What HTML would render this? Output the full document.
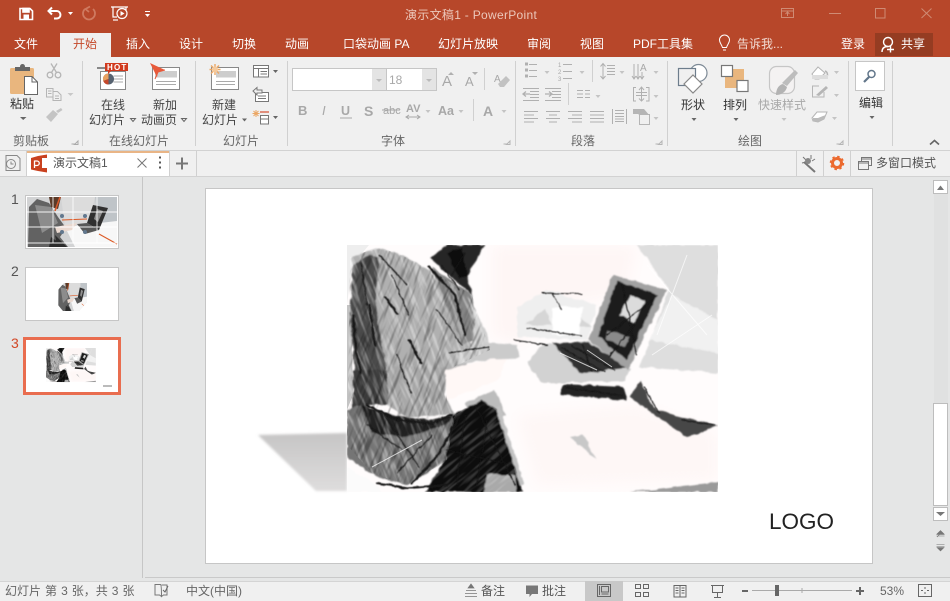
<!DOCTYPE html>
<html lang="zh"><head><meta charset="utf-8"><title>演示文稿1 - PowerPoint</title>
<style>
html,body{margin:0;padding:0;overflow:hidden}
body{width:950px;height:601px;position:relative;background:#e5e6e6;font-family:"Liberation Sans","Noto Sans CJK SC",sans-serif;font-size:12px;color:#444}
div,span,svg{position:absolute}
span{white-space:nowrap;line-height:16px}
.w{color:#fff}.d{color:#a8a8a8}.c{transform:translateX(-50%)}.l{color:#666}
</style></head><body>
<div style="left:0;top:0;width:950px;height:57px;background:#b7472a"></div>
<div style="left:0;top:57px;width:950px;height:93px;background:#f0f0f0"></div>
<div style="left:60px;top:33px;width:51px;height:24px;background:#f0f0f0"></div>
<div style="left:875px;top:33px;width:58px;height:23px;background:#953c22"></div>
<div style="left:0;top:150px;width:950px;height:27px;background:#f0f0f0;border-top:1px solid #d2d2d2;border-bottom:1px solid #d2d2d2;box-sizing:border-box"></div>
<div style="left:27px;top:151px;width:142px;height:25px;background:#fff;border-top:2px solid #e9b586;box-sizing:border-box"></div>
<div style="left:142px;top:177px;width:1px;height:401px;background:#c6c6c6"></div>
<div style="left:145px;top:577px;width:805px;height:1px;background:#c9c9c9"></div>
<div style="left:0;top:581px;width:950px;height:20px;background:#f0f0f0;border-top:1px solid #d4d4d4;box-sizing:border-box"></div>
<div style="left:585px;top:581px;width:38px;height:20px;background:#c8c8c8"></div>
<div style="left:205px;top:188px;width:668px;height:376px;background:#fff;border:1px solid #c6c6c6;box-sizing:border-box"></div>
<div style="left:25px;top:195px;width:94px;height:54px;background:#fff;border:1px solid #c6c6c6;box-sizing:border-box"></div>
<div style="left:25px;top:267px;width:94px;height:54px;background:#fff;border:1px solid #c6c6c6;box-sizing:border-box"></div>
<div style="left:23px;top:337px;width:98px;height:58px;background:#fff;border:3px solid #e96d4f;box-sizing:border-box"></div>
<div style="left:933px;top:180px;width:15px;height:14px;background:#fff;border:1px solid #bdbdbd;box-sizing:border-box"></div>
<div style="left:934px;top:194px;width:14px;height:209px;background:#e0e1e1"></div>
<div style="left:933px;top:403px;width:15px;height:103px;background:#fff;border:1px solid #bdbdbd;box-sizing:border-box"></div>
<div style="left:933px;top:507px;width:15px;height:14px;background:#fff;border:1px solid #bdbdbd;box-sizing:border-box"></div>

<svg width="950" height="601" viewBox="0 0 950 601" style="left:0;top:0">
<defs>
<filter id="rough" x="-2%" y="-2%" width="104%" height="104%"><feTurbulence type="fractalNoise" baseFrequency=".12" numOctaves="2" seed="4" result="n"/><feDisplacementMap in="SourceGraphic" in2="n" scale="4" xChannelSelector="R" yChannelSelector="G"/><feGaussianBlur stdDeviation=".7"/></filter>
<filter id="line" x="-2%" y="-2%" width="104%" height="104%"><feTurbulence type="fractalNoise" baseFrequency=".15" numOctaves="2" seed="9" result="n"/><feDisplacementMap in="SourceGraphic" in2="n" scale="3" xChannelSelector="R" yChannelSelector="G"/><feGaussianBlur stdDeviation=".4"/></filter>
<filter id="soft"><feGaussianBlur stdDeviation="7"/></filter>
<filter id="streak" x="0" y="0" width="100%" height="100%"><feTurbulence type="fractalNoise" baseFrequency=".03 .3" numOctaves="2" seed="7"/><feColorMatrix values="0 0 0 0 1  0 0 0 0 1  0 0 0 0 1  5 0 0 0 -2.4"/><feGaussianBlur stdDeviation=".4"/></filter>
<filter id="streakD" x="0" y="0" width="100%" height="100%"><feTurbulence type="fractalNoise" baseFrequency=".03 .35" numOctaves="2" seed="12"/><feColorMatrix values="0 0 0 0 0  0 0 0 0 0  0 0 0 0 0  5 0 0 0 -2.6"/><feGaussianBlur stdDeviation=".4"/></filter>
<filter id="bl"><feGaussianBlur stdDeviation="1.2"/></filter>
<linearGradient id="sh" x1="0" y1="0" x2="0" y2="1"><stop offset="0" stop-color="#c6c5c5"/><stop offset="1" stop-color="#dedddd"/></linearGradient>
<clipPath id="imgc"><rect width="371" height="247"/></clipPath>
<clipPath id="bodyc"><path d="M3 12 30 3 50 8 83 25 125 50 143 105 100 125 100 155 108 172 100 215 60 240 25 228 0 200Z"/></clipPath>
<clipPath id="lapc"><path d="M108 170 135 155 150 165 175 247H80Z"/></clipPath>
<clipPath id="octc"><path d="M64 283H87V302L79 311H63L58 305V290Z"/></clipPath>
<g id="sk" clip-path="url(#imgc)">
<rect width="371" height="247" fill="#fffcfc"/>
<g filter="url(#soft)"><path d="M145 0H290L280 50 220 60 170 100 145 90Z" fill="#fef6f5"/><path d="M170 170 290 160 371 190V235L190 240Z" fill="#fef7f6"/></g>
<path d="M0 0H22L5 20 0 60Z" fill="#eeeeee"/>
<path d="M0 60 4 60 6 150 0 165Z" fill="#c4c4c4"/>
<g filter="url(#rough)">
<path d="M290 0H371V128L293 122 322 45Z" fill="#dedede"/>
<path d="M325 50 371 75V108L302 95Z" fill="#f1f1f1"/>
<path d="M170 62 200 45 250 60 240 95 170 92Z" fill="#efefef"/>
<path d="M178 80 198 64 205 80ZM225 65 245 82H225Z" fill="#d6d6d6"/>
<path d="M205 62H236L232 90H205Z" fill="#fff"/>
<!-- body base -->
<path d="M5 12 30 3 50 8 83 25 112 70 125 100 118 128 40 128 5 80Z" fill="#b0b0b0"/>
<path d="M85 22 125 50 135 92 115 100Z" fill="#858585"/>
<path d="M120 50 140 88 143 105 125 105 128 75Z" fill="#cfcfcf"/>
<path d="M5 20 22 10 32 12 28 60 40 128H8L3 70Z" fill="#4c4c4c"/>
<path d="M41 122H100L98 150 108 170 60 172 40 160Z" fill="#a8a8a8"/>
<path d="M6 125H40L42 160 20 160 6 170Z" fill="#3c3c3c"/>
<path d="M83 13 100 0H138L120 30 125 50 110 37Z" fill="#262626"/>
<path d="M100 8 115 2 120 30 112 34Z" fill="#0a0a0a"/>
<path d="M98 125 145 114 160 113 151 135 100 155Z" fill="#fff8f6"/>
<path d="M113 105 143 98 170 100 172 113 145 114 110 120Z" fill="#cbcbcb"/>
<path d="M118 158 148 145 158 170 125 172Z" fill="#bcbcbc"/>
<path d="M0 165 15 160 40 170 85 175 108 170 100 215 60 240 30 232 0 212Z" fill="#747474"/>
<path d="M14 160 45 170 85 175 108 170 98 180 60 192 25 188Z" fill="#202020"/>
<path d="M106 170 135 155 150 165 176 247H78L98 215Z" fill="#0c0c0c"/>
<path d="M140 230 168 230 170 247H137Z" fill="#a9a9a9"/>
<path d="M0 222 30 240 34 247H0Z" fill="#fbfbfb"/>
<path d="M151 163 175 240" stroke="#c2c2c2" stroke-width="4" fill="none"/>
<path d="M195 100 241 96 284 124 278 136 195 138 180 118Z" fill="#d2d2d2"/>
<path d="M206 98 241 97 280 123 233 128Z" fill="#333"/>
<path d="M266 30 320 45 281 125 241 95Z" fill="#a2a2a2"/>
<path d="M270 35 310 50 280 115 251 92Z" fill="#1c1c1c"/>
<path d="M283 50 298 56 287 78 273 70Z" fill="#dcdcdc"/>
<path d="M262 85 282 92 278 102 258 95Z" fill="#8a8a8a"/>
<path d="M216 139 276 142 280 155 213 150Z" fill="#242424"/>
<path d="M293 135 306 162 326 170 370 180 353 188 340 192 310 172 283 152Z" fill="#474747"/>
<path d="M223 192 236 190 250 215Z" fill="#c8c8c8"/>
<path d="M283 247 371 237V247Z" fill="#9a9a9a"/>
</g>
<g clip-path="url(#bodyc)"><rect x="-70" y="-22" width="290" height="290" transform="rotate(68 75 123)" filter="url(#streak)" opacity=".36"/></g>
<g clip-path="url(#bodyc)" opacity=".3"><rect x="-70" y="-22" width="290" height="290" transform="rotate(-68 75 123)" filter="url(#streakD)"/></g>
<g clip-path="url(#lapc)" opacity=".2"><rect x="-70" y="-22" width="290" height="290" transform="rotate(-40 75 123)" filter="url(#streak)"/></g>
<g filter="url(#line)" fill="none" stroke="#151515" stroke-linecap="round">
<path stroke-width="2.2" d="M6 70 9 105 14 128M22 60 28 100M38 52 50 68M62 95 74 118M82 22 108 50 118 90M20 160 50 175 85 178 105 170M112 172 90 212 65 238M30 238 60 243 100 240"/>
<path stroke-width="1" d="M14 18 20 60M32 10 60 40M45 30 62 70M90 65 115 100M50 110 64 148M20 180 55 205M36 168 72 222M85 190 50 228M95 20 112 45M118 8 105 30M128 160 168 240M100 205 165 220M118 170 110 240M140 175 130 240M102 108 142 102M288 78 262 112M275 40 290 110M306 55 260 90M215 103 258 127M225 101 268 125M235 100 245 126M220 143 275 150M297 142 312 168M335 175 368 180M195 48 235 49M205 48 215 65M180 83 235 91M167 95 200 100"/>
</g>
<g stroke="#fff" stroke-width="1" fill="none" opacity=".7"><path d="M300 20 360 90M340 10 310 90M305 110 365 70M25 222 75 195M213 108 250 125M240 105 265 122"/></g>
</g>
<g id="ph">
<rect width="90" height="50" fill="#d2d3d4"/><path d="M68 0H90V25L72 28Z" fill="#bfc4c8"/><path d="M34 0H68L62 25 38 30Z" fill="#dcdcdc"/>
<path d="M38 30 90 24V50H48Z" fill="#f7f7f7"/>
<path d="M2 10 10 2 22 6 31 20 39 31 33 40 41 50H1Z" fill="#626262"/><path d="M8 8 24 10 31 26 15 36Z" fill="#8c8c8c"/>
<path d="M22 0H34L31 12 24 10Z" fill="#5a3a28"/><path d="M33 0 28 14" stroke="#d9592a" stroke-width="1.500" fill="none"/>
<path d="M28 30 50 26 45 33 30 36Z" fill="#ead9d0"/>
<path d="M66 8 81 11 72 33 60 26Z" fill="#303030"/><path d="M70 12 76 14 71 25 67 22Z" fill="#8f8f8f"/><path d="M50 27 60 26 72 33 58 37Z" fill="#585858"/>
<path d="M24 40 38 50H22ZM28 38 40 50H30Z" fill="#2c2c2c"/>
<path d="M35 23 60 22M72 37 90 47" stroke="#dc5a26" stroke-width="1.100" fill="none"/>
</g>
</defs>

<!-- quick access -->
<g fill="none" stroke="#fff" stroke-width="1.600">
<path d="M20 8.500H30L32.500 11V19.500H20Z"/><rect x="23" y="8.500" width="6" height="3.500" fill="#fff"/><rect x="23.500" y="14.500" width="5.500" height="5" fill="#fff" stroke="none"/>
<path stroke-width="2" d="M49 11H56.500C61.500 11 62 18.500 56.500 18.500H54M52 7.500 48.500 11 52 14.500"/>
</g>
<path d="M68 12H73L70.500 15Z" fill="#fff"/>
<path d="M85 9A6 6 0 1 0 93 9M90 6.500 85.500 9 89 12" fill="none" stroke="#cf7a60" stroke-width="1.800"/>
<g fill="none" stroke="#fff" stroke-width="1.200"><path d="M111 7H128M113 7V17H117M126 7V10"/><circle cx="122" cy="13.500" r="5"/><path d="M118 20H113"/></g><path d="M120.500 11 124.500 13.500 120.500 16Z" fill="#fff"/>
<path d="M145 11.500H150" stroke="#fff" stroke-width="1"/><path d="M145 14H150L147.500 17Z" fill="#fff"/>
<!-- window buttons -->
<g fill="none" stroke="#cf8b74" stroke-width="1"><rect x="781.500" y="8.500" width="12" height="9"/><path d="M781.500 11H793.500M787.500 16V12M785.500 14 787.500 12 789.500 14"/><path d="M829 13.500H841"/><rect x="875.500" y="8.500" width="9.500" height="9.500"/><path d="M921.500 8.500 931.500 18M931.500 8.500 921.500 18"/></g>
<!-- tell / share -->
<g fill="none" stroke="#fff" stroke-width="1"><path d="M722.500 47.500C721.500 44 719.500 43 719.500 40A5 5 0 0 1 729.500 40C729.500 43 727.500 44 726.500 47.500ZM723 50H726"/></g>
<g fill="none" stroke="#fff" stroke-width="1.400"><circle cx="888" cy="42" r="4.500"/><path d="M882 52C882 47.500 885 46.500 888 46.500M887 49.500H894M890.500 46V52.500"/></g>

<!-- separators -->
<g fill="#d0d0d0"><rect x="82" y="61" width="1" height="85"/><rect x="195" y="61" width="1" height="85"/><rect x="287" y="61" width="1" height="85"/><rect x="515" y="61" width="1" height="85"/><rect x="667" y="61" width="1" height="85"/><rect x="848" y="61" width="1" height="85"/><rect x="892" y="61" width="1" height="85"/><rect x="484" y="68" width="1" height="22"/><rect x="473" y="99" width="1" height="22"/><rect x="592" y="60" width="1" height="22"/><rect x="568" y="83" width="1" height="22"/>
<rect x="26" y="151" width="1" height="25"/><rect x="169" y="151" width="1" height="25"/><rect x="196" y="151" width="1" height="25"/><rect x="796" y="151" width="1" height="25"/><rect x="823" y="151" width="1" height="25"/><rect x="850" y="151" width="1" height="25"/></g>

<!-- clipboard -->
<rect x="10" y="68" width="24" height="26" rx="1.500" fill="#e9b67e"/><rect x="15" y="67" width="15" height="4" fill="#666"/><circle cx="22.500" cy="66.500" r="2.500" fill="#666"/>
<path d="M24.500 76.500H32L37.500 82V94.500H24.500Z" fill="#fff" stroke="#666"/><path d="M32 76.500V82H37.500" fill="none" stroke="#666"/>
<path d="M20 117H26.500L23.200 120Z" fill="#666"/>
<g fill="none" stroke="#b5b5b5" stroke-width="1.300"><circle cx="50" cy="75" r="2.800"/><circle cx="58" cy="75" r="2.800"/><path d="M51.500 72.500 57 63.500M56.500 72.500 51 63.500"/></g>
<g fill="none" stroke="#b5b5b5"><path d="M46.500 88.500H53V97H46.500ZM53 91.500H57.500L61 95V100.500H53Z" fill="#f0f0f0"/><path d="M48 91H51.500M48 93.500H51.500M55 96H59M55 98.500H59"/></g>
<path d="M67.500 93H73.500L70.500 96Z" fill="#c8c8c8"/>
<path d="M46 117 53 110 58 114 51 122ZM56 111 61 108 62.500 110 58 113Z" fill="#c4c4c4"/>

<!-- online slide -->
<rect x="100.500" y="71.500" width="25" height="18" fill="#fff" stroke="#888"/>
<path d="M97 68H108" stroke="#888" stroke-width="2"/>
<path d="M113.500 76H123M113.500 79H123M113.500 82H123" stroke="#aaa"/>
<circle cx="108.500" cy="79" r="5.500" fill="#566270"/><path d="M108.500 79V73.500A5.500 5.500 0 0 0 103.300 81Z" fill="#e8a05f"/><path d="M108.500 79 103.300 81A5.500 5.500 0 0 0 108.500 84.500Z" fill="#c6472a"/>
<path d="M105 63H128V71H111L108 74V71H105Z" fill="#d13a1e"/>
<!-- new anim page -->
<rect x="152.500" y="67.500" width="27" height="22" fill="#fff" stroke="#888"/><rect x="155" y="71" width="22" height="6.500" fill="#cdcdcd"/><path d="M156 81.500H176M156 84.500H176" stroke="#aaa"/>
<path d="M150 63 165 70 158 72 157 77Z" fill="#e8593a"/><path d="M165 70 158 72 155 79" fill="none" stroke="#e8593a"/>
<!-- new slide -->
<rect x="211.500" y="67.500" width="27" height="22" fill="#fff" stroke="#888"/><rect x="216" y="71" width="20" height="6.500" fill="#cdcdcd"/><path d="M216 81.500H235M216 84.500H235" stroke="#aaa"/>
<g stroke="#eba765" stroke-width="1.400"><path d="M215 64V75M209.500 69.500H220.500M211 65.500 219 73.500M219 65.500 211 73.500"/></g><circle cx="215" cy="69.500" r="3" fill="#f5c99b"/>
<g fill="none" stroke="#777"><rect x="253.500" y="65.500" width="15" height="11.500" fill="#fff"/><path d="M253.500 68.500H268.500M258.500 68.500V77M260.500 71.500H267M260.500 74H267"/></g><path d="M273 70H278L275.500 73Z" fill="#666"/>
<g fill="none" stroke="#777"><rect x="255.500" y="92.500" width="13" height="9" fill="#fff"/><path d="M253 91 257 87.500V90H262V93H257V95Z" fill="#f0f0f0"/><path d="M258 96H266M258 98.500H266"/></g>
<g stroke="#eba765"><path d="M256 110V117M252.500 113.500H259.500M253.500 111 258.500 116M258.500 111 253.500 116"/></g><g fill="none" stroke="#777"><rect x="260.500" y="115.500" width="8" height="8.500" fill="#fff"/><path d="M260.500 119H268.500"/></g><path d="M260 112H269" stroke="#d9634a" stroke-width="1.400"/><path d="M273 116H278L275.500 119Z" fill="#666"/>
<path d="M130.500 118.500H135.500L133 121.500Z" fill="none" stroke="#666"/><path d="M181.500 118.500H186.500L184 121.500Z" fill="none" stroke="#666"/><path d="M242 118.500H247L244.500 121.500Z" fill="#666"/>
<path d="M71.500 144 75.500 144M78 141V144.500H74.500Z" fill="none" stroke="#aaa"/>

<!-- font controls -->
<rect x="292.500" y="68.500" width="144" height="22" fill="#fff" stroke="#c6c6c6"/>
<rect x="372" y="69" width="14" height="21" fill="#e4e4e4"/><rect x="422" y="69" width="14" height="21" fill="#e4e4e4"/><rect x="386" y="68" width="1" height="22" fill="#c6c6c6"/>
<path d="M376 79H382L379 82ZM426 79H432L429 82Z" fill="#bbb"/>
<g fill="#a8a8a8" font-family="Liberation Sans" font-weight="700">
<text x="298" y="115" font-size="13">B</text><text x="322" y="115" font-size="13" font-style="italic" font-weight="400">I</text><text x="341" y="115" font-size="12.500">U</text><text x="364" y="116" font-size="14">S</text>
<text x="383" y="114" font-size="11" font-weight="400">abc</text><text x="406" y="112" font-size="11">AV</text><text x="438" y="115" font-size="12.500">Aa</text><text x="483" y="116" font-size="14">A</text><text x="442" y="86" font-size="15" font-weight="400">A</text><text x="465" y="86" font-size="13" font-weight="400">A</text><text x="494" y="82" font-size="10" font-weight="400">A</text></g>
<path d="M340 118H352" stroke="#a8a8a8"/><path d="M382 110H400" stroke="#a8a8a8"/><path d="M406 117H420M409 115 406 117 409 119M417 115 420 117 417 119" fill="none" stroke="#a8a8a8"/>
<path d="M448 75 451 72 454 75ZM472 72 475 75 478 72Z" fill="#b0b0b0"/>
<path d="M498 84 506 76 510 80 504 87H500Z" fill="#c2c2c2"/>
<path d="M425.500 110H430.500L428 113ZM458.500 110H463.500L461 113ZM501.500 110H506.500L504 113Z" fill="#c4c4c4"/>

<!-- paragraph -->
<g fill="none" stroke="#b0b0b0" stroke-width="1">
<path d="M529 64.500H537M529 70.500H537M529 76.500H537M563 64.500H572M563 71.500H572M563 78.500H572"/>
<path d="M607 65.500H615M607 68.500H615M607 71.500H615M607 74.500H615M603 64V79M600.500 66.500 603 63.500 605.500 66.500M600.500 76 603 79 605.500 76"/>
<path d="M634 64V79M638 64V79M642 72V79M632 76 634 79 636 76M636 76 638 79 640 76M640 76 642 79 644 76"/>
<path d="M523 88.500H539M530 91.500H539M530 94.500H539M530 97.500H539M523 100.500H539"/>
<path d="M545 88.500H561M552 91.500H561M552 94.500H561M552 97.500H561M545 100.500H561"/>
<path d="M577 90.500H583M577 94H583M577 97.500H583M585 90.500H590M585 94H590M585 97.500H590"/>
<path d="M636 87.500H633.500V101H636M646 87.500H649V101H646M641.500 87V101M639 90 641.500 87 644 90M639 98.500 641.500 101 644 98.500M636 92.500H647M636 95.500H647"/>
<path d="M524 111.500H538M524 115H534M524 118.500H538M524 122H534M546 111.500H560M549 115H557M546 118.500H560M549 122H557M568 111.500H582M572 115H582M568 118.500H582M572 122H582M590 111.500H604M590 115H604M590 118.500H604M590 122H604"/>
<path d="M612.500 109V124M626.500 109V124M615 113.500H624M615 116.500H624M615 119H624M615 121.500H624M615 110.500H624"/>
</g>
<path d="M525 62.500H528V65.500H525ZM525 68.500H528V71.500H525ZM525 74.500H528V77.500H525Z" fill="#b0b0b0"/>
<path d="M530 94H523M526 91.500 523 94 526 96.500M545 94H552M549 91.500 552 94 549 96.500" fill="none" stroke="#b0b0b0" stroke-width="1.300"/>
<g fill="#a8a8a8" font-family="Liberation Sans" font-size="6"><text x="558" y="67">1</text><text x="558" y="74">2</text><text x="558" y="81">3</text></g>
<text x="640" y="71" font-family="Liberation Sans" font-size="10" fill="#a8a8a8">A</text>
<path d="M544.500 71H549.500L547 74ZM579.500 71H584.500L582 74ZM619.500 71H624.500L622 74ZM653.500 71H658.500L656 74ZM595.500 95H600.500L598 98ZM653.500 95H658.500L656 98ZM653.500 117H658.500L656 120Z" fill="#c4c4c4"/>
<path d="M633 109H644L650 116H641L638 114H633Z" fill="#b5b5b5"/><rect x="639.500" y="114.500" width="10" height="10" fill="#f0f0f0" stroke="#b5b5b5"/>
<path d="M503.500 144 507.500 144M510 141V144.500H506.500ZM655.500 144 659.500 144M662 141V144.500H658.500ZM836.500 144 840.500 144M843 141V144.500H839.500Z" fill="none" stroke="#b5b5b5"/>

<!-- shapes -->
<circle cx="698.500" cy="73" r="8.500" fill="#fff" stroke="#7d8a96" stroke-width="1.200"/>
<rect x="678.500" y="68.500" width="17" height="17" fill="#f0f0f0" stroke="#6d7d8c" stroke-width="1.200"/>
<path d="M693 75 702 84 693 93 684 84Z" fill="#fff" stroke="#888" stroke-width="1.200"/>
<path d="M691.500 118H696.500L694 121ZM733.500 118H738.500L736 121ZM869.500 116H874.500L872 119Z" fill="#666"/>
<path d="M781.500 118H786.500L784 121Z" fill="#c4c4c4"/>
<rect x="725" y="69" width="19" height="19" fill="#e9b67e"/>
<rect x="721.500" y="65.500" width="11" height="11" fill="#fff" stroke="#777" stroke-width="1.200"/>
<rect x="737" y="80.500" width="11" height="11" fill="#fff" stroke="#777" stroke-width="1.200"/>
<rect x="769.500" y="66.500" width="25" height="27" rx="7" fill="#f4f2f2" stroke="#c6c6c6" stroke-width="1.200"/>
<path d="M798 73 787 86 782 83 795 70Z" fill="#bdbdbd"/><path d="M776 95C776 90 778 85 783 84L787 87C786 92 781 95 776 95Z" fill="#b3b3b3"/>
<path d="M812 74 818 67 825 73 819 79H815Z" fill="#fff" stroke="#b5b5b5"/><path d="M825 71C828 72 828 76 826.500 77" fill="none" stroke="#b5b5b5" stroke-width="1.500"/><rect x="812" y="75" width="16" height="4" fill="#dddddd"/>
<path d="M819 86H812.500V97H824V92" fill="none" stroke="#b5b5b5"/><path d="M816 95 826 86 828 88 819 96Z" fill="#b5b5b5"/>
<path d="M812 118 817 112H827L824 119 818 122 813 121Z" fill="#fff" stroke="#b5b5b5"/><path d="M813 121 818 122 824 119 826 115 823 116 818 118H813Z" fill="#bbb"/>
<path d="M834 71H839L836.500 74ZM834 94H839L836.500 97ZM832 117H837L834.500 120Z" fill="#c4c4c4"/>
<!-- edit -->
<rect x="855.500" y="61.500" width="29" height="29" fill="#fff" stroke="#c6c6c6"/>
<circle cx="871.500" cy="74" r="3.500" fill="none" stroke="#62768a" stroke-width="1.500"/><path d="M869 77 864 82" stroke="#62768a" stroke-width="2.200"/>
<path d="M930 144.500 934.500 140.500 939 144.500" fill="none" stroke="#666" stroke-width="1.600"/>

<!-- tab strip icons -->
<g fill="none" stroke="#888"><path d="M6 155.500H17L20 158.500V170.500H6Z"/><circle cx="11" cy="164" r="4.500" fill="#f0f0f0"/><path d="M11 161.500V164H13.500"/></g>
<path d="M38 156 47 154.500V172.500L38 171 31 169.500V158Z" fill="#c9411f"/><rect x="42" y="158" width="5" height="10" fill="#fff"/><path d="M34.500 160.500V168M34.500 161H37A2 2 0 0 1 37 165.500H34.500" fill="none" stroke="#fff" stroke-width="1.300"/>
<path d="M137.500 158.500 146.500 167.500M146.500 158.500 137.500 167.500" stroke="#777" fill="none"/>
<path d="M159 157.500H161M159 162.500H161M159 167.500H161" stroke="#555" stroke-width="2" fill="none"/>
<path d="M182 157.500V169.500M176 163.500H188" stroke="#777" stroke-width="2" fill="none"/>
<g fill="none" stroke="#777"><path d="M804 162 815 172" stroke-width="2"/><path d="M803 157 806 160M811 155V159M815 159 812 161M802 163 806 162"/></g><circle cx="808" cy="161" r="3" fill="#888"/>
<circle cx="837" cy="163" r="4.500" fill="none" stroke="#ec6a2f" stroke-width="3"/><circle cx="837" cy="163" r="6.500" fill="none" stroke="#ec6a2f" stroke-width="1.500" stroke-dasharray="2.500 2.600"/>
<g fill="none" stroke="#777"><rect x="861.500" y="157.500" width="10" height="8"/><rect x="858.500" y="161.500" width="10" height="8" fill="#f0f0f0"/><path d="M861.500 159H871.500M858.500 163H868.500"/></g>

<!-- thumbnails -->
<use href="#ph" transform="translate(27 197)"/>
<path d="M27 212H117M27 227H117M27 243H117M53 197V243M73 197V243M97 197V243" fill="none" stroke="#fff" stroke-width=".9" opacity=".9"/>
<g fill="#62788e"><circle cx="62" cy="216" r="2"/><circle cx="85" cy="216" r="2"/><circle cx="62" cy="232" r="2"/><circle cx="85" cy="232" r="2"/></g>
<g clip-path="url(#octc)"><use href="#ph" transform="translate(58 283) scale(.33 .56)"/></g>
<use href="#sk" transform="translate(46 348) scale(.1345 .138)"/>
<rect x="103" y="385" width="9" height="2" fill="#bbb"/>
<!-- main picture -->
<path d="M258 435 347 433V491H316Z" fill="url(#sh)" filter="url(#bl)"/>
<use href="#sk" transform="translate(347 245)"/>

<!-- scrollbar -->
<path d="M937 190H944L940.500 185.500Z" fill="#777"/><path d="M936 512H945L940.500 516Z" fill="#777"/>
<path d="M937 534 940.500 530.500 944 534ZM936.500 534.500H944.500M936.500 536H944.500M937 537 940.500 533.500" fill="#777" stroke="#777" stroke-width=".6"/>
<path d="M936.500 544.500H944.500M936.500 546.500H944.500M937 547.500 940.500 551 944 547.500Z" fill="#777" stroke="#777" stroke-width=".6"/>

<!-- status bar icons -->
<g fill="none" stroke="#777"><path d="M155 584.500H160.500C161.500 585 161.500 596 161.500 596.500L159.500 595H155ZM161.500 585H167V595H163.500L161.500 596.500"/><path d="M163 590 165 592 168 586" stroke="#666"/></g>
<path d="M465 593.500H477M465 596.500H477M466 590.500H476M471 584 474 588H468Z" fill="#777" stroke="#777" stroke-width=".7"/>
<path d="M526 585.500H538V594H532L529.500 597V594H526Z" fill="#777"/>
<g fill="none" stroke="#666"><rect x="597.500" y="584.500" width="13" height="12"/><rect x="601.500" y="586.500" width="7" height="5.500"/><path d="M599.500 586V595M601.500 594H608.500"/>
<rect x="635.500" y="584.500" width="5" height="4"/><rect x="643.500" y="584.500" width="5" height="4"/><rect x="635.500" y="592.500" width="5" height="4"/><rect x="643.500" y="592.500" width="5" height="4"/>
<path d="M674 585.500H680V597H674ZM680 585.500H686V597H680M675.500 588H678.500M675.500 590.500H678.500M675.500 593H678.500M681.500 588H684.500M681.500 590.500H684.500M681.500 593H684.500"/>
<path d="M711 585.500H724M712.500 585.500V592.500H722.500V585.500M717.500 592.500V597M714 597.500H721"/>
<rect x="918.500" y="584.500" width="13" height="12"/><path d="M925 587V589M925 592V594M921 590.500H923M927 590.500H929"/></g>
<path d="M742 591H748M856 591H864M860 587V595" stroke="#666" stroke-width="2" fill="none"/>
<path d="M752 590.500H852M802 588V593" stroke="#aaa"/><rect x="775" y="585" width="4" height="11" fill="#666"/>
</svg>

<!-- title + tabs -->
<span style="left:405px;top:7px;color:#ecc8bb;font-size:12px;letter-spacing:.3px">演示文稿1 - PowerPoint</span>
<span class="w" style="left:14px;top:36px">文件</span><span style="left:73px;top:36px;color:#c5492a">开始</span><span class="w" style="left:126px;top:36px">插入</span><span class="w" style="left:179px;top:36px">设计</span><span class="w" style="left:232px;top:36px">切换</span><span class="w" style="left:285px;top:36px">动画</span><span class="w" style="left:343px;top:36px">口袋动画 PA</span><span class="w" style="left:438px;top:36px">幻灯片放映</span><span class="w" style="left:527px;top:36px">审阅</span><span class="w" style="left:580px;top:36px">视图</span><span class="w" style="left:633px;top:36px">PDF工具集</span><span style="left:737px;top:36px;color:#f2dcd4">告诉我...</span><span class="w" style="left:841px;top:36px">登录</span><span class="w" style="left:901px;top:36px">共享</span>
<span style="left:107px;top:64px;color:#fff;font-size:8px;font-weight:700;letter-spacing:1.200px;line-height:8px">HOT</span>
<!-- ribbon labels -->
<span style="left:10px;top:96px;font-size:12px;color:#333">粘贴</span>
<span style="left:101px;top:97px">在线</span><span style="left:89px;top:112px">幻灯片</span>
<span style="left:153px;top:97px">新加</span><span style="left:141px;top:112px">动画页</span>
<span style="left:212px;top:97px">新建</span><span style="left:202px;top:112px">幻灯片</span>
<span class="d" style="left:389px;top:72px;font-size:12px">18</span>
<span style="left:681px;top:97px;color:#333">形状</span><span style="left:723px;top:97px;color:#333">排列</span><span class="d" style="left:758px;top:97px">快速样式</span><span style="left:859px;top:95px;color:#333">编辑</span>
<span class="l c" style="left:31px;top:133px">剪贴板</span><span class="l c" style="left:139px;top:133px">在线幻灯片</span><span class="l c" style="left:241px;top:133px">幻灯片</span><span class="l c" style="left:393px;top:133px">字体</span><span class="l c" style="left:583px;top:133px">段落</span><span class="l c" style="left:750px;top:133px">绘图</span>
<span style="left:53px;top:155px;color:#555">演示文稿1</span>
<span style="left:876px;top:155px;color:#555">多窗口模式</span>
<!-- thumbnail numbers -->
<span style="left:11px;top:191px;font-size:14px;color:#555">1</span><span style="left:11px;top:263px;font-size:14px;color:#555">2</span><span style="left:11px;top:335px;font-size:14px;color:#d24726">3</span>
<span style="left:769px;top:508px;font-size:22.500px;line-height:28px;color:#222">LOGO</span>
<!-- status -->
<span style="left:5px;top:583px;color:#666;word-spacing:.7px">幻灯片 第 3 张，共 3 张</span><span style="left:186px;top:583px;color:#666">中文(中国)</span><span style="left:481px;top:583px;color:#555">备注</span><span style="left:542px;top:583px;color:#555">批注</span><span style="left:880px;top:583px;color:#666">53%</span>
</body></html>
